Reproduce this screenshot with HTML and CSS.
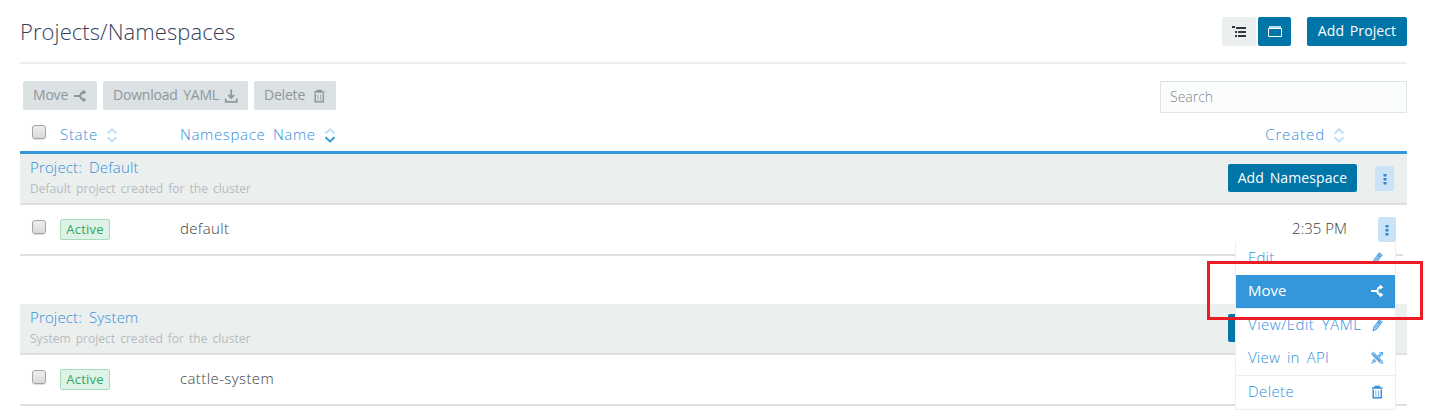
FILE: index.html
```html
<!DOCTYPE html>
<html lang="en">
<head>
<meta charset="utf-8">
<title>Projects/Namespaces</title>
<link rel="stylesheet" href="styles.css">
</head>
<body>
<svg class="defs" width="0" height="0">
  <defs>
    <symbol id="move" viewBox="0 0 14 14"><path d="M1 7h5.500M11 3.200H9.800Q7.400 4.300 7.400 7T9.800 10.800H11" fill="none" stroke="currentColor" stroke-width="1.900"/><path d="M9.800 .6l3.600 2.600-3.600 2.600zM9.800 8.200l3.600 2.600-3.600 2.600z" fill="currentColor"/></symbol>
    <symbol id="download" viewBox="0 0 14 14"><path d="M1.700 9.500v3.300h11V9.500M7.200 .5v8M4.200 5.800L7.200 9l3-3.200" fill="none" stroke="currentColor" stroke-width="1.700"/></symbol>
    <symbol id="trash" viewBox="0 0 14 14"><path d="M2 3h10.500M5.200 2.500V1.500h4v1" fill="none" stroke="currentColor" stroke-width="1.700"/><path d="M3.200 4.500v8.300h8.100V4.500" fill="none" stroke="currentColor" stroke-width="1.500"/><path d="M5.900 5.500v6M8.600 5.500v6" stroke="currentColor" opacity=".7"/></symbol>
    <symbol id="pencil" viewBox="0 0 14 14"><path d="M3.300 12.400l.7-3.400L9.300 2.200l2.500 1.900-5.300 6.800zM8 3.800l2.600 2M5.200 10l5-6.500" fill="none" stroke="currentColor" stroke-width="1.200" opacity=".85"/></symbol>
    <symbol id="api" viewBox="0 0 14 14"><path d="M1.500 12.500l3-3M9.500 4.500l3-3M9.500 1.500h3v3M1.800 3l1.500-1.500L12 10l.5 2.300-2.400-.5zM3.500 3.500l7 7M5 8l-2 1.500L4.500 11 6 9.500M8 5l1.800-2M11 4.500L9.200 6.200" fill="none" stroke="currentColor" stroke-width="1.200" opacity=".75"/></symbol>
    <symbol id="sort-up" viewBox="0 0 12 16"><path d="M1.500 6.500L6 2.200l4.500 4.300" fill="none" stroke-width="1.900"/></symbol>
    <symbol id="sort-down" viewBox="0 0 12 16"><path d="M1.500 10.200L6 14.500l4.500-4.300" fill="none" stroke-width="1.900"/></symbol>
  </defs>
</svg>
<main class="page">
  <header class="header">
    <h1>Projects/Namespaces</h1>
    <div class="views">
      <button class="view"><svg width="14" height="12" viewBox="0 0 14 12"><path d="M0 0h3v2H0zM4 1h10v2H4zM3 5h2v2H3zM6 5h8v2H6zM3 9h2v2H3zM6 9h8v2H6z" fill="#343840"/></svg></button>
      <button class="view on"><svg width="14" height="11" viewBox="0 0 14 11"><path d="M.5 2.500h13v8H.5z" fill="none" stroke="#fff"/><path d="M1 0h12v2H1z" fill="#b8dcf0"/></svg></button>
    </div>
    <button class="primary add-project"><span>Add Project</span></button>
  </header>
  <section class="toolbar">
    <button class="bulk b-move"><span>Move</span><svg class="icon"><use href="#move"/></svg></button>
    <button class="bulk b-download"><span>Download YAML</span><svg class="icon"><use href="#download"/></svg></button>
    <button class="bulk b-delete"><span>Delete</span><svg class="icon"><use href="#trash"/></svg></button>
    <input class="search" placeholder="Search">
  </section>
  <div class="columns">
    <i class="check"></i>
    <div class="c-state"><span class="t-state">State</span><svg class="sort"><use href="#sort-up"/><use href="#sort-down"/></svg></div>
    <div class="c-name"><span class="t-name">Namespace Name</span><svg class="sort"><use href="#sort-up"/><use class="sorted" href="#sort-down"/></svg></div>
    <div class="c-created"><span class="t-created">Created</span><svg class="sort"><use href="#sort-up"/><use href="#sort-down"/></svg></div>
  </div>
  <div class="group">
    <div class="about"><a class="t-project">Project: Default</a><p class="t-desc">Default project created for the cluster</p></div>
    <button class="primary add-ns"><span>Add Namespace</span></button>
    <button class="dots"><svg width="4" height="12" viewBox="0 0 4 12"><path d="M.5 1h3v2.400h-3zM.5 5h3v2.400h-3zM.5 9h3v2.400h-3z" fill="#3186cb"/></svg></button>
  </div>
  <div class="row first">
    <i class="check"></i><div class="c-state"><span class="badge"><span>Active</span></span></div><div class="c-name"><span class="t-default">default</span></div>
    <div class="c-time"><span class="t-time">2:35 PM</span></div>
    <button class="dots"><svg width="4" height="12" viewBox="0 0 4 12"><path d="M.5 1h3v2.400h-3zM.5 5h3v2.400h-3zM.5 9h3v2.400h-3z" fill="#3186cb"/></svg></button>
    <div class="menu">
      <a class="item"><span class="t-edit">Edit</span><svg class="icon"><use href="#pencil"/></svg></a>
      <a class="item active"><span class="t-move">Move</span><svg class="icon"><use href="#move"/></svg></a>
      <a class="item ruled"><span class="t-yaml">View/Edit YAML</span><svg class="icon"><use href="#pencil"/></svg></a>
      <a class="item"><span class="t-api">View in API</span><svg class="icon"><use href="#api"/></svg></a>
      <a class="item ruled"><span class="t-delete">Delete</span><svg class="icon"><use href="#trash"/></svg></a>
    </div>
    <div class="highlight"></div>
  </div>
  <div class="group second">
    <div class="about"><a class="t-project">Project: System</a><p class="t-desc">System project created for the cluster</p></div>
    <button class="primary add-ns"></button>
    <span class="dots-space"></span>
  </div>
  <div class="row">
    <i class="check"></i><div class="c-state"><span class="badge"><span>Active</span></span></div><div class="c-name"><span class="t-cattle">cattle-system</span></div>
  </div>
</main>
</body>
</html>
```
FILE: styles.css
```css
* { box-sizing: border-box; }
body { margin: 0; min-height: 100vh; background: #fff; color: #3d3d3d; font: 300 15px/20px "Open Sans", "Noto Sans", sans-serif; }
.defs { position: absolute; }
button { border: 0; padding: 0; margin: 0; font: inherit; display: flex; align-items: center; justify-content: center; border-radius: 2px; flex: none; }
span { white-space: nowrap; }
.page { margin-left: 20px; width: 1387px; }
.header { height: 64px; border-bottom: 2px solid #ebefee; display: flex; align-items: flex-start; padding-top: 17px; }
h1 { margin: -1px 0 0; font-size: 22px; line-height: 30px; font-weight: 300; letter-spacing: .08px; color: #34405a; flex: 1; }
.views { display: flex; gap: 2px; margin-right: 16px; }
.view { width: 34px; height: 29px; background: #ebeff0; }
.view.on { width: 33px; background: #0075a8; }
.primary { background: #0075a8; color: #fff; font-size: 14px; font-weight: 400; letter-spacing: .1px; word-spacing: 2px; }
.primary span { margin-top: -1px; }
.add-project { width: 100px; height: 29px; }
.toolbar { display: flex; padding: 17px 0 0 3px; height: 50px; gap: 6px; }
.bulk { height: 29px; background: #dce1e3; color: #8d979e; font-size: 14px; font-weight: 400; justify-content: space-between; padding: 0 10px; letter-spacing: -.2px; word-spacing: 2px; }
.bulk span { margin-top: -1px; }
.b-move { width: 74px; }
.b-download { width: 145px; }
.b-delete { width: 82px; }
.icon { width: 14px; height: 14px; flex: none; }
.search { margin-left: auto; width: 247px; height: 32px; border: 1px solid #dce4e4; background: #fbfdfc; padding: 0 9px 2px; font: 300 14px "Open Sans", sans-serif; }
.search::placeholder { color: #7f8790; opacity: 1; }
.columns { height: 40px; display: flex; align-items: center; border-bottom: 3px solid #3497da; color: #3290dc; padding: 3px 62px 0 12px; }
.columns div { display: flex; align-items: center; }
.columns .check { margin-top: -5px; }
.check { width: 14px; height: 14px; border: 1px solid #a4a4a4; border-radius: 3px; background: linear-gradient(#eee, #d9d9d9); box-shadow: 0 1px 1px #ddd; flex: none; }
.c-state { width: 120px; margin-left: 14px; flex: none; }
.sort { width: 12px; height: 16px; margin: 1px 0 0 8px; stroke: #bfdef5; }
.sorted { stroke: #3497da; }
.t-state { letter-spacing: .7px; }
.t-name { letter-spacing: .65px; word-spacing: 3px; }
.t-created { letter-spacing: .9px; }
.c-created { margin-left: auto; }
.group { height: 51px; background: #ebefee; border-bottom: 2px solid #dedfe0; display: flex; align-items: flex-start; padding: 4px 13px 0 10px; }
.about { flex: 1; margin-top: -1px; }
.t-project { display: block; width: max-content; color: #3290dc; letter-spacing: .15px; word-spacing: 3px; }
.t-desc { margin: 4px 0 0; width: max-content; font-size: 12px; line-height: 16px; color: #b8bcc1; font-weight: 400; letter-spacing: .04px; word-spacing: 1.800px; }
.add-ns { width: 129px; height: 28px; margin-top: 6px; margin-right: 18px; }
.dots { width: 19px; height: 25px; background: #cbe3f7; margin-top: 8px; }
.dots-space { width: 19px; }
.row { position: relative; height: 51px; border-bottom: 2px solid #dedfe0; display: flex; align-items: flex-start; padding: 14px 7px 0 12px; }
.row.first { width: 1383px; }
.row .check { margin-top: 1px; }
.badge { display: flex; align-items: center; justify-content: center; width: 50px; height: 21px; border: 1px solid #a6dcbb; border-radius: 2px; background: #dff2e7; color: #2fa862; font-size: 13px; font-weight: 400; letter-spacing: .2px; padding-bottom: 1px; }
.row .c-name, .c-time { margin-top: -1px; }
.t-default { letter-spacing: .35px; }
.t-cattle { letter-spacing: .4px; }
.c-time { margin-left: auto; margin-right: 31px; }
.row .dots { width: 18px; margin-top: -2px; }
.menu { position: absolute; z-index: 1; left: 1215px; top: 37px; width: 161px; height: 168px; background: #fff; border: 1px solid #ebefee; border-top: 0; color: #3290dc; }
.item { display: flex; height: 33px; align-items: center; justify-content: space-between; padding: 0 11px 0 12px; }
.item span { margin-top: -3px; }
.item .icon { margin-top: -1px; }
.active { background: #3497da; color: #fff; }
.ruled { border-top: 1px solid #ebefee; height: 34px; }
.t-edit { letter-spacing: .2px; }
.t-move { font-weight: 400; }
.t-yaml { letter-spacing: .5px; word-spacing: 3px; }
.t-api { letter-spacing: .2px; word-spacing: 3px; }
.t-delete { letter-spacing: .4px; }
.highlight { position: absolute; z-index: 2; left: 1187px; top: 56px; width: 216px; height: 59px; border: 3px solid #ed1c24; }
.second { margin-top: 48px; }
```
